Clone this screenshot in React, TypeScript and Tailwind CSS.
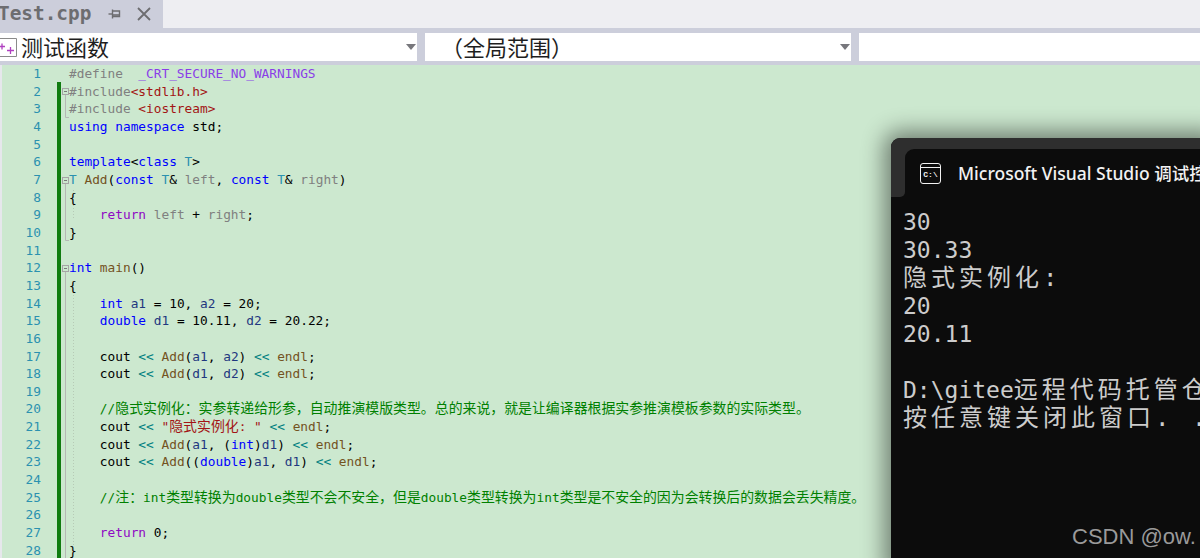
import { Fragment } from 'react';

type Kind = 'pp' | 'macro' | 'inc' | 'kw' | 'type' | 'fn' | 'param' | 'ret' | 'str' | 'com' | 'var' | 'plain' | 'op';

const kindClass: Record<Kind, string> = {
  pp: 'text-[#808080]',
  macro: 'text-[#8a3ee8]',
  inc: 'text-[#a31515]',
  kw: 'text-[#0000ff]',
  type: 'text-[#2b91af]',
  fn: 'text-[#74531f]',
  param: 'text-[#808080]',
  ret: 'text-[#8f08c4]',
  str: 'text-[#a31515]',
  com: 'text-[#008000]',
  var: 'text-[#1f377f]',
  plain: 'text-black',
  op: 'text-[#008080]',
};

type Token = [string, Kind];

const lines: Token[][] = [
  [['#define  ', 'pp'], ['_CRT_SECURE_NO_WARNINGS', 'macro']],
  [['#include', 'pp'], ['<stdlib.h>', 'inc']],
  [['#include ', 'pp'], ['<iostream>', 'inc']],
  [['using namespace ', 'kw'], ['std;', 'plain']],
  [],
  [['template', 'kw'], ['<', 'plain'], ['class ', 'kw'], ['T', 'type'], ['>', 'plain']],
  [['T ', 'type'], ['Add', 'fn'], ['(', 'plain'], ['const ', 'kw'], ['T', 'type'], ['& ', 'plain'], ['left', 'param'], [', ', 'plain'], ['const ', 'kw'], ['T', 'type'], ['& ', 'plain'], ['right', 'param'], [')', 'plain']],
  [['{', 'plain']],
  [['    ', 'plain'], ['return ', 'ret'], ['left', 'param'], [' + ', 'plain'], ['right', 'param'], [';', 'plain']],
  [['}', 'plain']],
  [],
  [['int ', 'kw'], ['main', 'fn'], ['()', 'plain']],
  [['{', 'plain']],
  [['    ', 'plain'], ['int ', 'kw'], ['a1', 'var'], [' = 10, ', 'plain'], ['a2', 'var'], [' = 20;', 'plain']],
  [['    ', 'plain'], ['double ', 'kw'], ['d1', 'var'], [' = 10.11, ', 'plain'], ['d2', 'var'], [' = 20.22;', 'plain']],
  [],
  [['    cout ', 'plain'], ['<<', 'op'], [' ', 'plain'], ['Add', 'fn'], ['(', 'plain'], ['a1', 'var'], [', ', 'plain'], ['a2', 'var'], [') ', 'plain'], ['<<', 'op'], [' ', 'plain'], ['endl', 'fn'], [';', 'plain']],
  [['    cout ', 'plain'], ['<<', 'op'], [' ', 'plain'], ['Add', 'fn'], ['(', 'plain'], ['d1', 'var'], [', ', 'plain'], ['d2', 'var'], [') ', 'plain'], ['<<', 'op'], [' ', 'plain'], ['endl', 'fn'], [';', 'plain']],
  [],
  [['    ', 'plain'], ['//隐式实例化：实参转递给形参，自动推演模版类型。总的来说，就是让编译器根据实参推演模板参数的实际类型。', 'com']],
  [['    cout ', 'plain'], ['<<', 'op'], [' ', 'plain'], ['"隐式实例化: "', 'str'], [' ', 'plain'], ['<<', 'op'], [' ', 'plain'], ['endl', 'fn'], [';', 'plain']],
  [['    cout ', 'plain'], ['<<', 'op'], [' ', 'plain'], ['Add', 'fn'], ['(', 'plain'], ['a1', 'var'], [', (', 'plain'], ['int', 'kw'], [')', 'plain'], ['d1', 'var'], [') ', 'plain'], ['<<', 'op'], [' ', 'plain'], ['endl', 'fn'], [';', 'plain']],
  [['    cout ', 'plain'], ['<<', 'op'], [' ', 'plain'], ['Add', 'fn'], ['((', 'plain'], ['double', 'kw'], [')', 'plain'], ['a1', 'var'], [', ', 'plain'], ['d1', 'var'], [') ', 'plain'], ['<<', 'op'], [' ', 'plain'], ['endl', 'fn'], [';', 'plain']],
  [],
  [['    ', 'plain'], ['//注：int类型转换为double类型不会不安全，但是double类型转换为int类型是不安全的因为会转换后的数据会丢失精度。', 'com']],
  [],
  [['    ', 'plain'], ['return ', 'ret'], ['0;', 'plain']],
  [['}', 'plain']],
];

// CJK glyphs sit in a wider cell than the latin text, zero leading keeps the rows even
function Mixed({ text }: { text: string }) {
  const parts = text.split(/([\u3000-\u303f\u4e00-\u9fff\uff00-\uffef]+)/);
  return (
    <>
      {parts.map((part, i) =>
        i % 2 === 1 ? (
          <span key={i} className="text-[13.9px] leading-[0] [font-family:'Noto_Sans_CJK_SC',sans-serif]">{part}</span>
        ) : (
          <Fragment key={i}>{part}</Fragment>
        )
      )}
    </>
  );
}

function Combo({ className, text, pad }: { className: string; text?: string; pad: string }) {
  return (
    <div className={`h-7 bg-white flex items-center ${className}`}>
      <span className={`pb-[3px] text-[22px] leading-7 text-[#1e1e1e] [font-family:'Noto_Sans_CJK_SC',sans-serif] ${pad}`}>{text}</span>
      {text && (
        <span className="ml-auto mr-[1px] w-0 h-0 border-x-[5.5px] border-x-transparent border-t-[6px] border-t-[#77777c]" />
      )}
    </div>
  );
}

// outlining margin: collapse boxes, their brackets and the indent guides
function Gutter() {
  const boxes = [23, 112, 200];
  return (
    <svg className="shrink-0 mr-[-5px]" width="14" height="493" viewBox="0 0 14 493" fill="none">
      <path d="M4.5 30V52.5H8M4.5 119V175.5H8M4.5 207V493" stroke="#b4b8b4" />
      <path d="M12.5 125V155M12.5 230V480" stroke="#b6cab6" strokeDasharray="1 2" />
      {boxes.map((y) => (
        <g key={y}>
          <rect x="1.5" y={y + 0.5} width="6" height="6" stroke="#a5a5a5" fill="#cce8cf" />
          <path d={`M3 ${y + 3.5}H6`} stroke="#777" />
        </g>
      ))}
    </svg>
  );
}

export default function App() {
  return (
    <div className="w-[1200px] h-[558px] overflow-hidden relative bg-[#cccedb]">
      {/* tab strip */}
      <div className="h-7 bg-[#eeeef2] flex">
        <div className="w-[163px] h-7 bg-[#cccedb] flex items-center overflow-hidden">
          <span className="ml-[-2px] text-[19.4px] font-bold text-[#6d6d70] [font-family:'DejaVu_Sans_Mono',monospace]">Test.cpp</span>
          <svg className="ml-[17px]" width="13" height="12" viewBox="0 0 13 12" fill="none" stroke="#6d6d70" strokeWidth="1.4">
            <path d="M0.5 6H4.5" />
            <path d="M4.5 1.5V10.5" />
            <path d="M4.5 3H11.5V8.5H4.5" />
            <path d="M4.5 7H11.5" strokeWidth="1.6" />
          </svg>
          <svg className="ml-[16px]" width="14" height="14" viewBox="0 0 14 14" fill="none" stroke="#6d6d70" strokeWidth="1.8">
            <path d="M1 1L13 13M13 1L1 13" />
          </svg>
        </div>
      </div>

      {/* nav bar combos */}
      <div className="h-[37px] pt-[5px] flex gap-2">
        <div className="flex w-[417px] h-7 bg-white items-center">
          <svg className="shrink-0" width="17" height="19" viewBox="0 0 17 19" fill="none">
            <path d="M0 0.5H16.5V18.5H0" stroke="#8a8a8a" strokeWidth="1" />
            <path d="M-1 8.5H5M2 5.5V11.5" stroke="#b040c0" strokeWidth="1.3" />
            <path d="M7 12.5H14M10.5 9V16" stroke="#b040c0" strokeWidth="1.3" />
          </svg>
          <Combo className="flex-1" text="测试函数" pad="pl-[4px]" />
        </div>
        <Combo className="w-[426px]" text="（全局范围）" pad="pl-[16px]" />
        <Combo className="flex-1" pad="" />
      </div>

      {/* editor */}
      <div className="h-[493px] bg-[#cce8cf] overflow-hidden flex text-[12.8px] leading-[17.67px] [font-family:'DejaVu_Sans_Mono',monospace]">
        <div className="w-[2px] bg-[#e6e7ec] shrink-0" />
        <div className="w-[39px] shrink-0 text-right text-[#2b91af]">
          {lines.map((_, i) => (
            <div key={i} className="h-[17.67px]">{i + 1}</div>
          ))}
        </div>
        <div className="ml-[16px] mt-[17px] w-[4px] shrink-0 bg-[#107c10]" />
        <Gutter />
        <div className="flex-1 whitespace-pre ml-[-1px]">
          {lines.map((line, i) => (
            <div key={i} className="h-[17.67px]">
              {line.map(([text, kind], j) => (
                <span key={j} className={kindClass[kind]}><Mixed text={text} /></span>
              ))}
            </div>
          ))}
        </div>
      </div>

      {/* console window over the editor */}
      <div className="absolute left-[891px] top-[138px] w-[320px] h-[430px] bg-[#0c0c0c] rounded-tl-[9px] overflow-hidden shadow-[0_0_22px_7px_rgba(0,0,0,0.45)]">
        <div className="h-[11px] bg-[#2e2e2e]" />
        <div className="flex h-[48px] bg-[#2e2e2e]">
          <div className="w-[14px] shrink-0 h-[48px] bg-[#0c0c0c]">
            <div className="h-full bg-[#2e2e2e] rounded-br-[5px]" />
          </div>
          <div className="flex-1 bg-[#0c0c0c] rounded-tl-[9px] flex items-center pl-[15px]">
            <div className="w-[21px] h-[21px] border border-[#f2f2f2] rounded-[3px] flex flex-col shrink-0">
              <div className="h-[4px] border-b border-[#f2f2f2]" />
              <span className="text-[8px] leading-[13px] text-center font-bold text-[#f2f2f2] [font-family:'Liberation_Mono',monospace]">C:\</span>
            </div>
            <span className="ml-[17px] text-[17.5px] font-medium text-[#f2f2f2] whitespace-nowrap [font-family:'Noto_Sans','Noto_Sans_CJK_SC',sans-serif]">Microsoft Visual Studio 调试控制台</span>
          </div>
        </div>
        <div className="pt-[11px] pl-[12px] text-[23px] leading-[28px] text-[#cccccc] whitespace-pre [font-family:'DejaVu_Sans_Mono','Noto_Sans_CJK_SC',monospace]">
          <div>30</div>
          <div>30.33</div>
          <div className="h-[28px] tracking-[4px] text-[24px]">隐式实例化:</div>
          <div>20</div>
          <div>20.11</div>
          <div className="h-[28px]" />
          <div className="h-[28px]">D:\gitee<span className="text-[24px] tracking-[4px]">远程代码托管仓库</span></div>
          <div className="h-[28px] text-[24px] tracking-[4px]">按任意键关闭此窗口. . .</div>
        </div>
      </div>

      <span className="absolute left-[1072px] top-[523px] text-[22px] leading-7 text-[#9a9a9a] whitespace-nowrap [font-family:'Liberation_Sans',sans-serif]">CSDN @ow.</span>
    </div>
  );
}
